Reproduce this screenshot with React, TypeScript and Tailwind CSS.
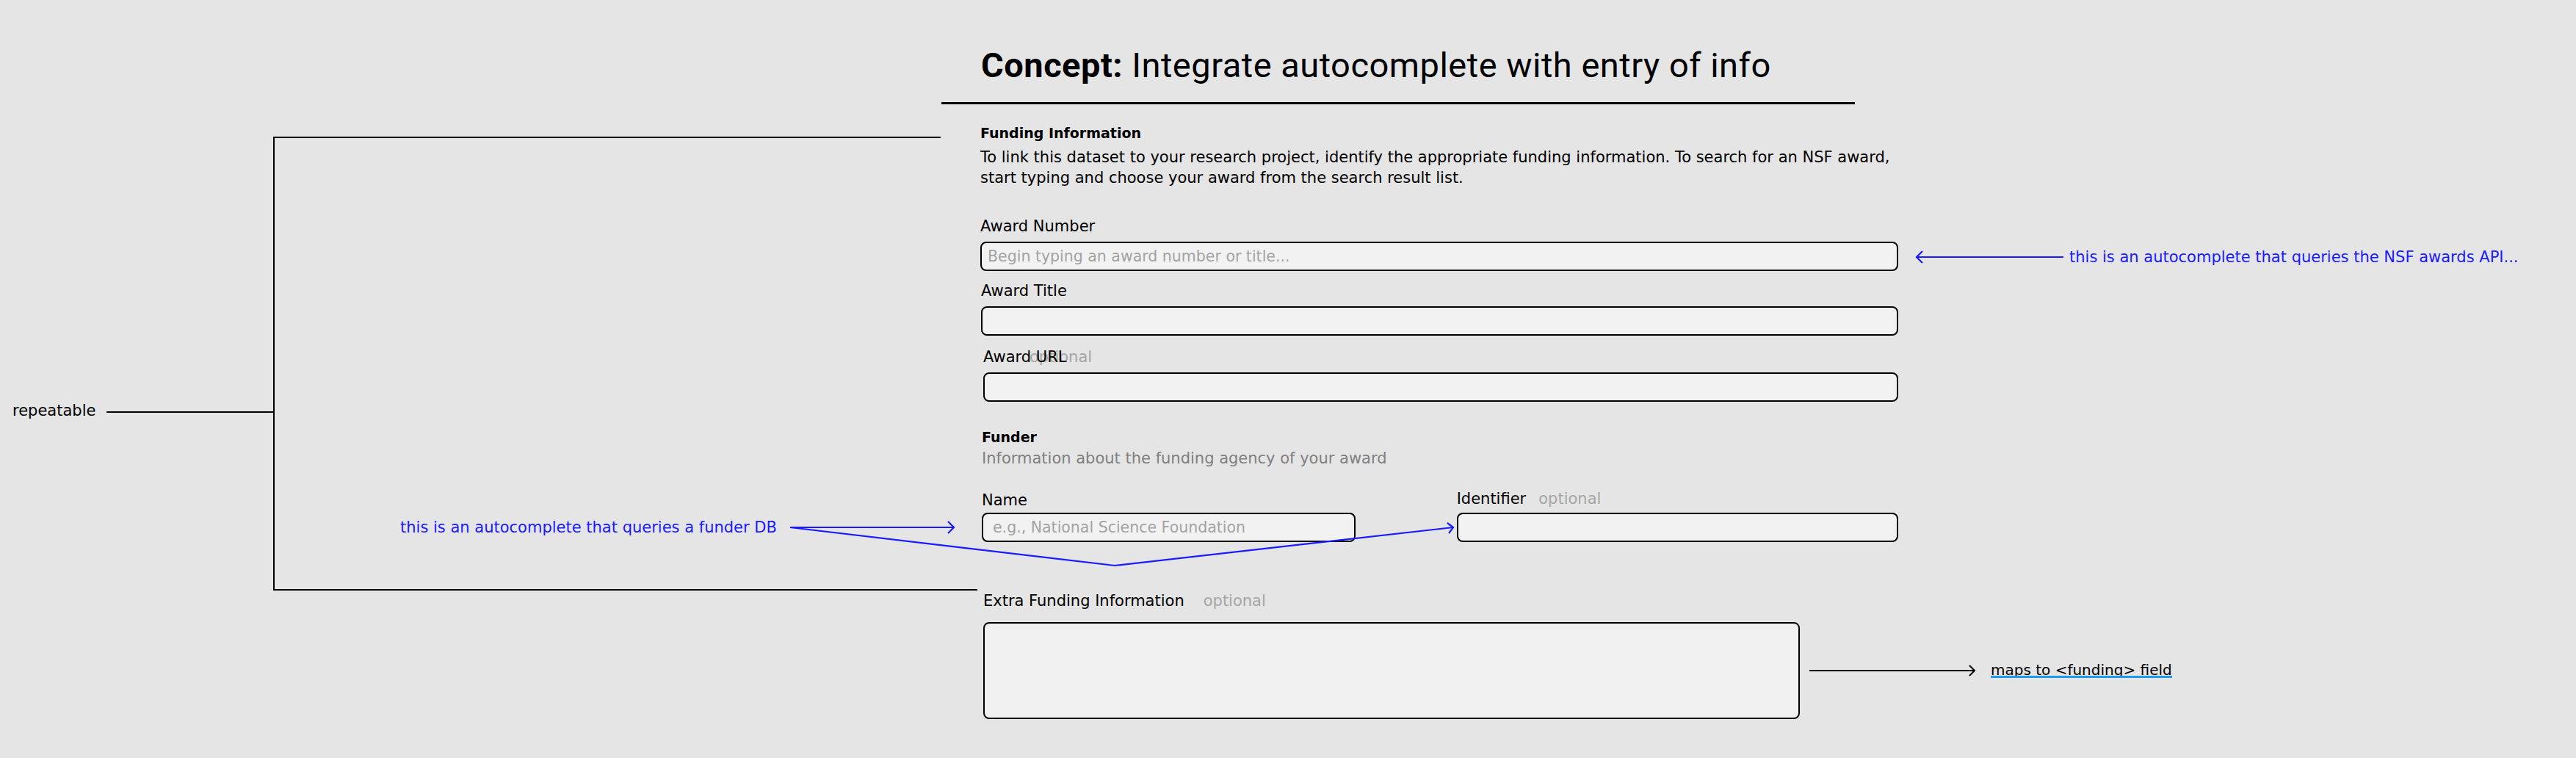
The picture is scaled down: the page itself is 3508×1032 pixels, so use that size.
import React from "react";

const inputCls =
  "block h-[40px] w-full rounded-[8px] border-2 border-black bg-[#f2f2f2] text-[20.5px] text-black outline-none placeholder:text-[#a3a3a3]";

const Optional = ({ className = "" }: { className?: string }) => (
  <span className={`text-[#a6a6a6] ${className}`}>optional</span>
);

const Annotations = () => (
  <svg
    className="pointer-events-none absolute left-0 top-0"
    width={3508}
    height={1032}
    viewBox="0 0 3508 1032"
    fill="none"
  >
    {/* repeatable bracket */}
    <g stroke="#000" strokeWidth={2}>
      <line x1={145} y1={561} x2={373} y2={561} />
      <line x1={373} y1={186} x2={373} y2={804} />
      <line x1={372} y1={187} x2={1281} y2={187} />
      <line x1={372} y1={803} x2={1331} y2={803} />
    </g>

    {/* maps to <funding> */}
    <g stroke="#000" strokeWidth={2}>
      <line x1={2464} y1={913} x2={2689} y2={913} />
      <polyline points="2682,906 2689,913 2682,920" />
    </g>

    {/* blue arrows */}
    <g stroke="#1a1aff" strokeWidth={2.2}>
      <line x1={2610} y1={350} x2={2810} y2={350} />
      <polyline points="2618,342 2610,350 2618,358" />

      <line x1={1076} y1={718} x2={1299} y2={718} />
      <polyline points="1291,710 1299,718 1291,726" />

      <polyline points="1076,718 1518,770 1979,718" />
      <polyline points="1971,712 1979,718 1973,726" />
    </g>
  </svg>
);

export default function App() {
  return (
    <div className="relative h-[1032px] w-[3508px] overflow-hidden bg-[#e5e5e5] font-['DejaVu_Sans',sans-serif] text-[21px] leading-[28px] text-black">
      <div className="ml-[1282px] flex w-[1310px] flex-col">
        <header className="w-[1244px] border-b-[3px] border-black pb-[22px] pl-[54px] pt-[61px]">
          <h1 className="whitespace-nowrap font-['Roboto',sans-serif] text-[47px] leading-[56px] tracking-[0.5px]">
            <span className="font-bold">Concept:</span> Integrate autocomplete with entry of info
          </h1>
        </header>

        <section className="ml-[53px] w-[1250px]">
          <h2 className="mt-[25px] text-[19px] font-bold">Funding Information</h2>
          <p className="mt-[5px] whitespace-nowrap">
            To link this dataset to your research project, identify the appropriate funding information. To search for an NSF award,
            <br />
            start typing and choose your award from the search result list.
          </p>

          <label className="mt-[38px] block">Award Number</label>
          <input className={`${inputCls} mt-[7px] pl-[8px]`} placeholder="Begin typing an award number or title..." />

          <div className="ml-[1px]">
            <label className="mt-[13px] block">Award Title</label>
            <input className={`${inputCls} mt-[7px]`} />
          </div>

          <div className="ml-[4px]">
            <label className="relative mt-[15px] block">
              <Optional className="absolute left-[63px] top-0" />
              <span className="relative">Award URL</span>
            </label>
            <input className={`${inputCls} mt-[7px]`} />
          </div>

          <div className="ml-[2px]">
            <h3 className="mt-[34px] text-[19px] font-bold">Funder</h3>
            <p className="mt-[1px] text-[#808080]">Information about the funding agency of your award</p>

            <div className="mt-[29px] flex gap-[138px]">
              <div className="w-[510px]">
                <label className="block">Name</label>
                <input
                  className={`${inputCls} mt-[3px] pl-[13px]`}
                  placeholder="e.g., National Science Foundation"
                />
              </div>
              <div className="w-[603px]">
                <label className="-mt-[2px] block">
                  Identifier
                  <Optional className="ml-[17px]" />
                </label>
                <input className={`${inputCls} mt-[5px]`} />
              </div>
            </div>
          </div>

          <div className="ml-[4px]">
            <label className="mt-[66px] block">
              Extra Funding Information
              <Optional className="ml-[26px]" />
            </label>
            <textarea className="mt-[15px] block h-[132px] w-[1112px] resize-none rounded-[8px] border-2 border-black bg-[#f0f0f0] outline-none" />
          </div>
        </section>
      </div>

      <Annotations />

      <div className="absolute left-[17px] top-[545px] whitespace-nowrap">repeatable</div>
      <div className="absolute left-[545px] top-[704px] whitespace-nowrap text-[#1a1aff]">
        this is an autocomplete that queries a funder DB
      </div>
      <div className="absolute left-[2818px] top-[336px] whitespace-nowrap text-[#1a1aff]">
        this is an autocomplete that queries the NSF awards API...
      </div>
      <div className="absolute left-[2711px] top-[898px] whitespace-nowrap text-[20px]">
        maps to &lt;funding&gt; field
        <div className="absolute left-0 right-0 top-[22px] h-[3px] bg-[#1d9bf0]" />
      </div>
    </div>
  );
}
